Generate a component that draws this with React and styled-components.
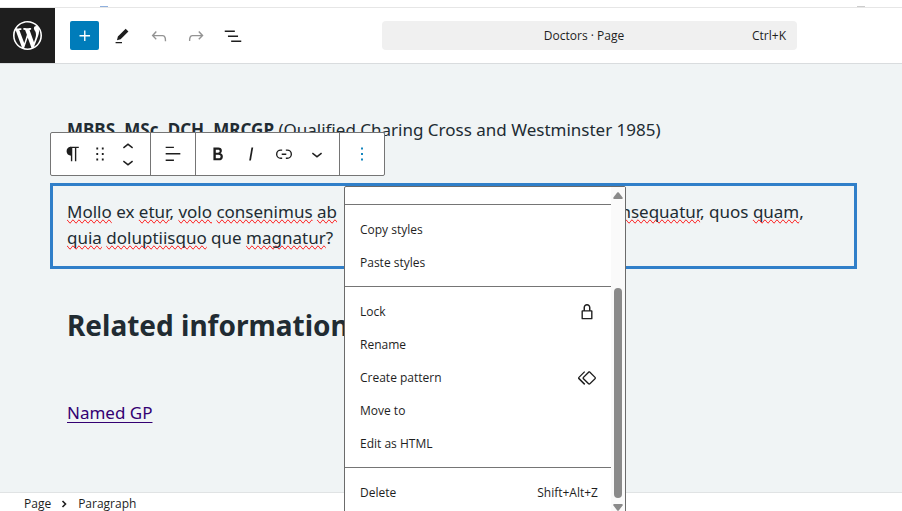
import React from "react";
import styled, { createGlobalStyle } from "styled-components";

const GlobalStyle = createGlobalStyle`
  * {
    box-sizing: border-box;
  }
  body {
    margin: 0;
    background: #fff;
    color: #1e1e1e;
    font-family: "Open Sans", "Noto Sans", sans-serif;
    font-size: 12px;
  }
  button {
    font: inherit;
    color: inherit;
    background: none;
    border: 0;
    padding: 0;
    cursor: pointer;
  }
`;

const Editor = styled.div`
  display: flex;
  flex-direction: column;
  height: 100vh;
  overflow: hidden;
`;

const BrowserEdge = styled.div`
  flex: none;
  display: flex;
  align-items: flex-end;
  justify-content: space-between;
  height: 8px;
  padding: 0 37px 0 100px;
  border-bottom: 1px solid #e6e6e6;
  span {
    width: 8px;
    height: 1px;
    background: #8fb0de;
  }
  span + span {
    background: #ccc;
  }
`;

const Header = styled.header`
  flex: none;
  display: flex;
  align-items: center;
  height: 56px;
  border-bottom: 1px solid #d9dcde;
  background: #fff;
`;

const Logo = styled.a`
  display: flex;
  align-items: center;
  justify-content: center;
  width: 55px;
  height: 55px;
  background: #1e1e1e;
  color: #fff;
`;

const Tools = styled.div`
  display: flex;
  gap: 8px;
  margin: 0 135px 0 15px;
`;

const ToolButton = styled.button`
  display: flex;
  align-items: center;
  justify-content: center;
  width: 29px;
  height: 29px;
  border-radius: 2px;
  color: ${(props) => (props.$primary ? "#fff" : "#1e1e1e")};
  background: ${(props) => (props.$primary ? "#007cba" : "transparent")};
  &:disabled {
    color: #949494;
  }
`;

const CommandBar = styled.button`
  flex: 1;
  display: flex;
  align-items: center;
  height: 29px;
  margin-right: 105px;
  padding: 0 11px 0 34px;
  border-radius: 4px;
  background: #f0f0f0;
  .title {
    flex: 1;
  }
`;

const Canvas = styled.main`
  flex: 1;
  min-height: 0;
  padding: 53px 45px 0 50px;
  background: #f0f4f5;
  color: #212b32;
  font-family: "Noto Sans", "Open Sans", sans-serif;
  font-size: 17px;
  line-height: 26px;
`;

const Paragraph = styled.p`
  margin: 0 17px;
`;

const Block = styled.div`
  position: relative;
  margin-top: 40px;
  padding: 13px 14px 15px;
  border: 3px solid #307fc9;
  p {
    margin: 0;
  }
`;

const Misspelt = styled.span`
  text-decoration-line: spelling-error;
`;

const CoveredText = styled.span`
  display: inline-block;
  width: 265px;
`;

const Heading = styled.h2`
  margin: 37px 17px 0;
  font-size: 28px;
  line-height: 38px;
`;

const PageLink = styled.a`
  display: inline-block;
  margin: 56px 17px 0;
  color: #330072;
  text-decoration-skip-ink: none;
  text-underline-offset: 3px;
`;

/* floats above the selected block */
const Toolbar = styled.div`
  position: absolute;
  top: -54px;
  left: -3px;
  display: flex;
  height: 44px;
  border: 1px solid #757575;
  border-radius: 2px;
  background: #fff;
  color: #1e1e1e;
`;

const ToolbarGroup = styled.div`
  display: flex;
  align-items: center;
  padding: 0 6px 0 5px;
  & + & {
    border-left: 1px solid #757575;
  }
`;

const ToolbarButton = styled.button`
  display: flex;
  align-items: center;
  justify-content: center;
  width: ${(props) => (props.$narrow ? 22 : 33)}px;
  height: 33px;
  color: ${(props) => (props.$active ? "#007cba" : "inherit")};
`;

const Mover = styled.div`
  display: flex;
  flex-direction: column;
  button {
    height: 15px;
  }
`;

const Menu = styled.div`
  position: absolute;
  top: 53px;
  left: 293px;
  display: flex;
  width: 282px;
  height: 344px;
  border: 1px solid #6b6b6b;
  border-radius: 2px;
  background: #fff;
  font-family: "Open Sans", "Noto Sans", sans-serif;
  font-size: 12px;
  line-height: 16px;
`;

const MenuItems = styled.div`
  flex: 1;
`;

const MenuGroup = styled.div`
  min-height: 17px;
  padding: ${(props) => (props.$empty ? "0" : "8px 0 7px")};
  & + & {
    border-top: 1px solid #757575;
  }
`;

const MenuItem = styled.button`
  display: flex;
  align-items: center;
  justify-content: space-between;
  width: 100%;
  height: 33px;
  padding: 0 13px 0 15px;
`;

const Scrollbar = styled.div`
  display: flex;
  flex-direction: column;
  align-items: center;
  width: 14px;
  padding-top: 5px;
  background: #fafafa;
  color: #8a8a8a;
  .thumb {
    width: 8px;
    height: 210px;
    margin: 89px 0 6px;
    border-radius: 4px;
    background: #8a8a8a;
  }
`;

const Footer = styled.footer`
  flex: none;
  display: flex;
  align-items: flex-start;
  gap: 10px;
  height: 19px;
  padding: 4px 24px 0;
  border-top: 1px solid #e0e3e4;
  background: #fff;
  line-height: 14px;
  svg {
    margin-top: 3px;
  }
`;

const paths = {
  plus: "M11 12.5V17.5H12.5V12.5H17.5V11H12.5V6H11V11H6V12.5H11Z",
  pencil: "m19 7-3-3-8.5 8.5-1 4 4-1L19 7Zm-7 11.5H5V20h7v-1.5Z",
  undo: "M18.3 11.7c-.6-.6-1.4-.9-2.3-.9H6.7l2.9-3.3-1.1-1-4.5 5L8.5 16l1-1-2.7-2.7H16c.5 0 .9.2 1.3.5 1 1 1 3.4 1 4.5v.3h1.5v-.2c0-1.5 0-4.3-1.5-5.7z",
  redo: "M15.6 6.5l-1.1 1 2.9 3.3H8c-.9 0-1.7.3-2.3.9-1.4 1.5-1.4 4.2-1.4 5.6v.2h1.5v-.3c0-1.1 0-3.5 1-4.5.3-.3.7-.5 1.3-.5h9.2L14.5 15l1.1 1.1 4.6-4.6-4.6-5z",
  listView: "M3 6h11v1.5H3V6Zm3.5 5.5h11V13h-11v-1.5ZM21 17H10v1.5h11V17Z",
  paragraph: "M18.3 4H9.9v-.1l-.9.2c-2.3.4-4 2.4-4 4.8s1.7 4.4 4 4.8l.7.1V20h1.5V5.5h2.9V20h1.5V5.5h2.7V4z",
  drag: "M8 7h2V5H8v2zm0 6h2v-2H8v2zm0 6h2v-2H8v2zm6-14v2h2V5h-2zm0 8h2v-2h-2v2zm0 6h2v-2h-2v2z",
  up: "M6.5 12.4L12 8l5.5 4.4-.9 1.2L12 10l-4.5 3.6-1-1.2z",
  down: "M17.5 11.6L12 16l-5.5-4.4.9-1.2L12 14l4.5-3.6 1 1.2z",
  align: "M13 5.5H4V4h9v1.5Zm7 7H4V11h16v1.5Zm-7 7H4V18h9v1.5Z",
  bold: "M14.7 11.3c1-.6 1.5-1.6 1.5-3 0-2.3-1.3-3.4-4-3.4H7v14h5.8c1.4 0 2.5-.3 3.3-1 .8-.7 1.2-1.7 1.2-2.9.1-1.9-.8-3.1-2.6-3.7zm-5.1-4h2.3c.6 0 1.1.1 1.4.4.3.3.5.7.5 1.2s-.2 1-.5 1.2c-.3.3-.8.4-1.4.4H9.6V7.3zm4.6 9c-.4.3-1 .4-1.7.4H9.6v-3.9h2.9c.7 0 1.3.2 1.7.5.4.3.6.8.6 1.5s-.2 1.2-.6 1.5z",
  italic: "M12.5 5L10 19h1.9l2.5-14z",
  link: "M10 17.389H8.444A5.194 5.194 0 1 1 8.444 7H10v1.5H8.444a3.694 3.694 0 0 0 0 7.389H10v1.5ZM14 7h1.556a5.194 5.194 0 0 1 0 10.39H14v-1.5h1.556a3.694 3.694 0 0 0 0-7.39H14V7Zm-4.5 6h5v-1.5h-5V13Z",
  more: "M13 19h-2v-2h2v2zm0-6h-2v-2h2v2zm0-6h-2V5h2v2z",
  lock: "M17 10h-1.2V7c0-2.1-1.7-3.8-3.8-3.8-2.1 0-3.8 1.7-3.8 3.8v3H7c-.6 0-1 .4-1 1v8c0 .6.4 1 1 1h10c.6 0 1-.4 1-1v-8c0-.6-.4-1-1-1zM9.8 7c0-1.2 1-2.2 2.2-2.2 1.2 0 2.2 1 2.2 2.2v3H9.8V7zm6.7 11.5h-9v-7h9v7z",
  pattern: "M21.3 10.8l-5.6-5.6c-.7-.7-1.8-.7-2.5 0l-5.6 5.6c-.7.7-.7 1.8 0 2.5l5.6 5.6c.3.3.8.5 1.2.5s.9-.2 1.2-.5l5.6-5.6c.8-.7.8-1.9.1-2.5zm-1 1.4l-5.6 5.6c-.1.1-.3.1-.4 0l-5.6-5.6c-.1-.1-.1-.3 0-.4l5.6-5.6s.1-.1.2-.1.1 0 .2.1l5.6 5.6c.1.1.1.3 0 .4zm-16.6-.4L10 5.5l-1-1-6.3 6.3c-.7.7-.7 1.8 0 2.5L9 19.5l1.1-1.1-6.3-6.3c-.2 0-.2-.2-.1-.3z",
  wordpress: "M20 10c0-5.51-4.49-10-10-10C4.48 0 0 4.49 0 10c0 5.52 4.48 10 10 10 5.51 0 10-4.48 10-10zM7.78 15.37L4.37 6.22c.55-.02 1.17-.08 1.17-.08.5-.06.44-1.13-.06-1.11 0 0-1.45.11-2.37.11-.18 0-.37 0-.58-.01C4.12 2.69 6.87 1.11 10 1.11c2.33 0 4.45.87 6.05 2.34-.68-.11-1.65.39-1.65 1.58 0 .74.45 1.36.9 2.1.35.61.55 1.36.55 2.46 0 1.49-1.4 5-1.4 5l-3.03-8.37c.54-.02.82-.17.82-.17.5-.05.44-1.25-.06-1.22 0 0-1.44.12-2.38.12-.87 0-2.33-.12-2.33-.12-.5-.03-.56 1.2-.06 1.22l.92.08 1.26 3.41zM17.41 10c.24-.64.74-1.87.43-4.25.7 1.29 1.05 2.71 1.05 4.25 0 3.29-1.73 6.24-4.4 7.78.97-2.59 1.94-5.2 2.92-7.78zM6.1 18.09C3.12 16.65 1.11 13.53 1.11 10c0-1.3.23-2.48.72-3.59C3.25 10.3 4.67 14.2 6.1 18.09zm4.03-6.63l2.58 6.98c-.86.29-1.76.45-2.71.45-.79 0-1.57-.11-2.29-.33.81-2.38 1.62-4.74 2.42-7.1z",
};

function Icon({ name, size = 22, viewBox = "0 0 24 24" }) {
  return (
    <svg width={size} height={size} viewBox={viewBox} fill="currentColor" aria-hidden="true">
      <path d={paths[name]} />
    </svg>
  );
}

const menuGroups = [
  [{ label: "Copy styles" }, { label: "Paste styles" }],
  [
    { label: "Lock", icon: "lock" },
    { label: "Rename" },
    { label: "Create pattern", icon: "pattern" },
    { label: "Move to" },
    { label: "Edit as HTML" },
  ],
  [{ label: "Delete", shortcut: "Shift+Alt+Z" }],
];

function OptionsMenu() {
  return (
    <Menu role="menu">
      <MenuItems>
        <MenuGroup $empty />
        {menuGroups.map((group) => (
          <MenuGroup key={group[0].label}>
            {group.map((item) => (
              <MenuItem key={item.label} role="menuitem">
                <span>{item.label}</span>
                {item.icon && <Icon name={item.icon} />}
                {item.shortcut && <span>{item.shortcut}</span>}
              </MenuItem>
            ))}
          </MenuGroup>
        ))}
      </MenuItems>
      <Scrollbar>
        <svg width="10" height="7" viewBox="0 0 10 7" fill="currentColor">
          <path d="M4.2.6Q5-.2 5.8.6L9.6 5.6Q10 7 9 7H1Q0 7 .4 5.6z" />
        </svg>
        <div className="thumb" />
        <svg width="10" height="7" viewBox="0 0 10 7" fill="currentColor">
          <path d="M4.2 6.4Q5 7.2 5.8 6.4L9.6 1.4Q10 0 9 0H1Q0 0 .4 1.4z" />
        </svg>
      </Scrollbar>
    </Menu>
  );
}

function BlockToolbar() {
  return (
    <Toolbar role="toolbar" aria-label="Block tools">
      <ToolbarGroup>
        <ToolbarButton aria-label="Paragraph">
          <Icon name="paragraph" />
        </ToolbarButton>
        <ToolbarButton $narrow aria-label="Drag">
          <Icon name="drag" />
        </ToolbarButton>
        <Mover>
          <ToolbarButton aria-label="Move up">
            <Icon name="up" />
          </ToolbarButton>
          <ToolbarButton aria-label="Move down">
            <Icon name="down" />
          </ToolbarButton>
        </Mover>
      </ToolbarGroup>
      <ToolbarGroup>
        <ToolbarButton aria-label="Align text">
          <Icon name="align" />
        </ToolbarButton>
      </ToolbarGroup>
      <ToolbarGroup>
        <ToolbarButton aria-label="Bold">
          <Icon name="bold" />
        </ToolbarButton>
        <ToolbarButton aria-label="Italic">
          <Icon name="italic" />
        </ToolbarButton>
        <ToolbarButton aria-label="Link">
          <Icon name="link" />
        </ToolbarButton>
        <ToolbarButton aria-label="More">
          <Icon name="down" />
        </ToolbarButton>
      </ToolbarGroup>
      <ToolbarGroup>
        <ToolbarButton $active aria-label="Options">
          <Icon name="more" />
        </ToolbarButton>
      </ToolbarGroup>
      <OptionsMenu />
    </Toolbar>
  );
}

function App() {
  return (
    <Editor>
      <GlobalStyle />
      <BrowserEdge>
        <span />
        <span />
      </BrowserEdge>
      <Header>
        <Logo href="#" aria-label="View pages">
          <Icon name="wordpress" size={29} viewBox="0 0 20 20" />
        </Logo>
        <Tools>
          <ToolButton $primary aria-label="Add block">
            <Icon name="plus" />
          </ToolButton>
          <ToolButton aria-label="Tools">
            <Icon name="pencil" />
          </ToolButton>
          <ToolButton disabled aria-label="Undo">
            <Icon name="undo" />
          </ToolButton>
          <ToolButton disabled aria-label="Redo">
            <Icon name="redo" />
          </ToolButton>
          <ToolButton aria-label="Document overview">
            <Icon name="listView" />
          </ToolButton>
        </Tools>
        <CommandBar>
          <span className="title">Doctors · Page</span>
          <span>Ctrl+K</span>
        </CommandBar>
      </Header>
      <Canvas>
        <Paragraph>
          <b>MBBS, MSc, DCH, MRCGP</b> (Qualified Charing Cross and Westminster 1985)
        </Paragraph>
        <Block>
          <p>
            <Misspelt>Mollo</Misspelt> ex <Misspelt>etur</Misspelt>, <Misspelt>volo</Misspelt>{" "}
            <Misspelt>consenimus</Misspelt> <Misspelt>ab</Misspelt>
            <CoveredText />
            <Misspelt>consequatur</Misspelt>, quos <Misspelt>quam</Misspelt>,
            <br />
            <Misspelt>quia</Misspelt> <Misspelt>doluptiisquo</Misspelt> que{" "}
            <Misspelt>magnatur</Misspelt>?
          </p>
          <BlockToolbar />
        </Block>
        <Heading>Related information</Heading>
        <PageLink href="#">Named GP</PageLink>
      </Canvas>
      <Footer>
        <span>Page</span>
        <svg width="7" height="8" viewBox="0 0 7 8" fill="none" stroke="#1e1e1e" strokeWidth="1.6">
          <path d="M1.5 1l3 3-3 3" />
        </svg>
        <span>Paragraph</span>
      </Footer>
    </Editor>
  );
}

export default App;
